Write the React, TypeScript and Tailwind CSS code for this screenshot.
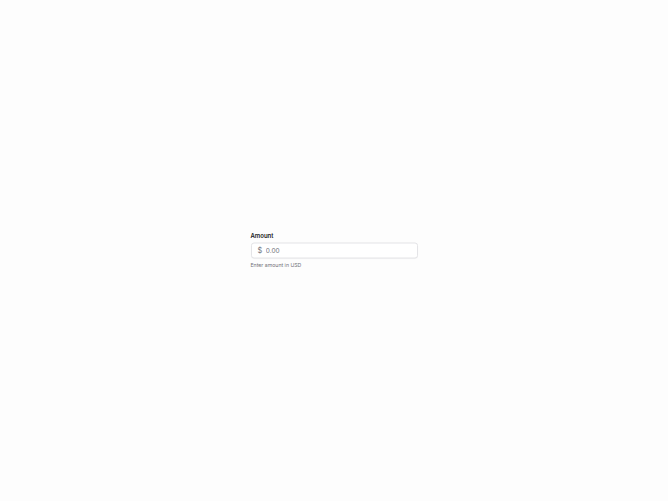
export default function App() {
  return (
    <div className="flex min-h-screen items-center justify-center bg-[#fdfdfd] font-['Inter',sans-serif]">
      <div className="w-[167px] -translate-y-[0.5px]">
        <label htmlFor="amount" className="block text-[6px] font-semibold leading-[8px] text-[#18181b]">
          Amount
        </label>
        <div className="mt-[3px] flex h-[16px] items-center rounded-[3px] border border-[#e4e4e7] bg-white px-[6px] shadow-[0_0.5px_1px_rgba(0,0,0,0.04)]">
          <span className="text-[7.5px] leading-none text-[#71717a]">$</span>
          <input
            id="amount"
            placeholder="0.00"
            className="ml-[3.5px] w-full bg-transparent text-[6.5px] leading-none text-[#18181b] outline-none placeholder:text-[#71717a]"
          />
        </div>
        <p className="mt-[3px] text-[5.2px] leading-[7px] text-[#71717a]">Enter amount in USD</p>
      </div>
    </div>
  );
}
